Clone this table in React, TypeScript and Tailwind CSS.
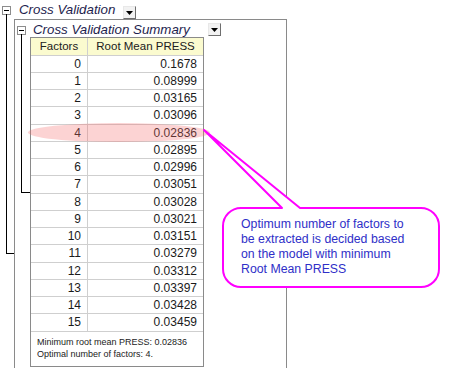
const rows: [number, string][] = [
  [0, '0.1678'],
  [1, '0.08999'],
  [2, '0.03165'],
  [3, '0.03096'],
  [4, '0.02836'],
  [5, '0.02895'],
  [6, '0.02996'],
  [7, '0.03051'],
  [8, '0.03028'],
  [9, '0.03021'],
  [10, '0.03151'],
  [11, '0.03279'],
  [12, '0.03312'],
  [13, '0.03397'],
  [14, '0.03428'],
  [15, '0.03459'],
]

function MinusBox() {
  return (
    <span className="flex h-[9px] w-[9px] shrink-0 items-center justify-center border border-[#8c8c8c] bg-white">
      <span className="h-px w-[5px] bg-black" />
    </span>
  )
}

function DropButton() {
  return (
    <span className="flex h-[13px] w-[13px] shrink-0 items-center justify-center border border-t-[#e8e8e8] border-l-[#e8e8e8] border-r-[#6e6e6e] border-b-[#6e6e6e] bg-[#f2f2f2]">
      <svg width="7" height="4" viewBox="0 0 7 4">
        <path d="M0 0 L7 0 L3.5 4 Z" fill="#000" />
      </svg>
    </span>
  )
}

export default function App() {
  return (
    <div
      className="relative h-[368px] w-[450px] overflow-hidden bg-white text-[#1a1a1a]"
      style={{ fontFamily: '"Liberation Sans", Arial, sans-serif' }}
    >
      {/* outer tree node */}
      <div className="flex h-[19px] items-start">
        <span className="ml-[2px] mt-[6px]">
          <MinusBox />
        </span>
        <span className="ml-[8px] w-[104px] text-[13.3px] italic leading-[19px] text-[#1e1e4e]">
          Cross Validation
        </span>
        <span className="mt-[6px]">
          <DropButton />
        </span>
      </div>
      <div className="absolute left-[6px] top-[14px] h-[240px] w-[8px] border-b border-l border-black" />

      <div className="relative ml-[14px] h-[360px] w-[273px] border-l border-r border-t border-[#8a8a8a]">
        {/* inner tree node */}
        <div className="flex h-[17px] items-start">
          <span className="ml-[2px] mt-[6px]">
            <MinusBox />
          </span>
          <span className="ml-[7px] w-[175px] text-[13.3px] italic leading-[19px] text-[#1e1e4e]">
            Cross Validation Summary
          </span>
          <span className="mt-[3px]">
            <DropButton />
          </span>
        </div>
        <div className="absolute left-[6px] top-[14px] h-[159px] w-[9px] border-b border-l border-black" />

        <div className="ml-[15px] w-[174px] border border-[#8a8a8a]">
          <div className="flex h-[18px] border-b border-[#cfcfcf] bg-[#fbfbcf] text-[11.5px] leading-[17px] text-[#202020]">
            <div className="w-[57px] border-r border-[#cfcfcf] text-center">Factors</div>
            <div className="flex-1 text-center">Root Mean PRESS</div>
          </div>
          {rows.map(([factor, value], i) => (
            <div
              key={factor}
              className={`flex border-b border-[#cfcfcf] text-[12px] ${i % 4 === 3 ? 'h-[18px] leading-[17px]' : 'h-[17px] leading-[16px]'}`}
            >
              <div className="w-[57px] border-r border-[#cfcfcf] pr-[6px] text-right">{factor}</div>
              <div className="flex-1 pr-[6px] text-right">{value}</div>
            </div>
          ))}
          <div className="h-[34px] pl-[6px] pt-[4px] text-[9px] leading-[12px] text-[#222]">
            <div>Minimum root mean PRESS: 0.02836</div>
            <div>Optimal number of factors: 4.</div>
          </div>
        </div>
      </div>

      {/* highlight of the minimum row */}
      <div className="absolute left-[28px] top-[123px] h-[19px] w-[182px] rounded-[50%] bg-[rgba(245,110,110,0.3)]" />

      {/* callout */}
      <svg className="pointer-events-none absolute left-0 top-0" width="450" height="368">
        <path
          d="M241 208 L282 208 L204 130 L300 208 L421 208 A18 18 0 0 1 439 226 L439 269 A18 18 0 0 1 421 287 L241 287 A18 18 0 0 1 223 269 L223 226 A18 18 0 0 1 241 208 Z"
          fill="#fff"
          stroke="#ff00ff"
          strokeWidth="2"
          strokeLinejoin="round"
        />
      </svg>
      <div className="absolute left-[241px] top-[217px] text-[12.3px] leading-[15px] text-[#2f2fc8]">
        <div>Optimum number of factors to</div>
        <div>be extracted is decided based</div>
        <div>on the model with minimum</div>
        <div>Root Mean PRESS</div>
      </div>
    </div>
  )
}
